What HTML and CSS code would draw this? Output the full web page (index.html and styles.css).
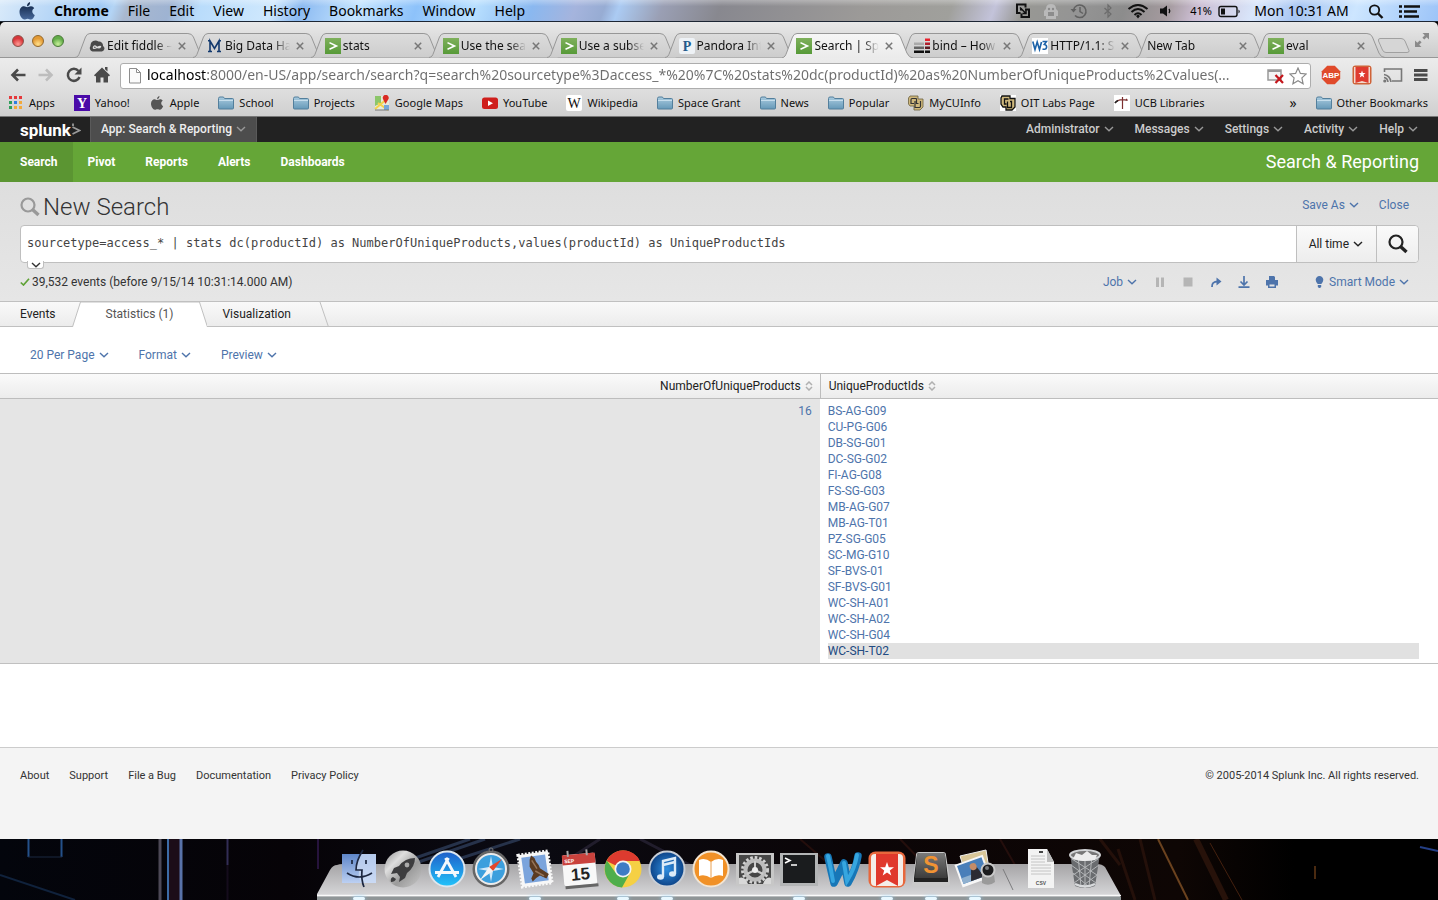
FILE: index.html
```html
<!DOCTYPE html>
<html lang="en">
<head>
<meta charset="utf-8">
<title>Search | Splunk</title>
<link rel="stylesheet" href="styles.css">
</head>
<body>
<svg class="defs" aria-hidden="true">
  <defs>
    <linearGradient id="g-folder" x1="0" y1="0" x2="0" y2="1"><stop offset="0" stop-color="#a9cbdf"/><stop offset="1" stop-color="#6699b8"/></linearGradient>
    <linearGradient id="g-tab" x1="0" y1="0" x2="0" y2="1"><stop offset="0" stop-color="#dcdcdc"/><stop offset="1" stop-color="#cdcdcd"/></linearGradient>
    <linearGradient id="g-tabon" x1="0" y1="0" x2="0" y2="1"><stop offset="0" stop-color="#f6f6f6"/><stop offset="1" stop-color="#ebebeb"/></linearGradient>
    <linearGradient id="g-green" x1="0" y1="0" x2="0" y2="1"><stop offset="0" stop-color="#7fb05c"/><stop offset="1" stop-color="#579a38"/></linearGradient>
    <linearGradient id="g-apple" x1="0" y1="0" x2="0" y2="1"><stop offset="0" stop-color="#0c2040"/><stop offset="1" stop-color="#47689a"/></linearGradient>
    <linearGradient id="g-blue" x1="0" y1="0" x2="0" y2="1"><stop offset="0" stop-color="#1f5fc9"/><stop offset="1" stop-color="#21c3fa"/></linearGradient>
    <linearGradient id="g-finder" x1="0" y1="0" x2="0" y2="1"><stop offset="0" stop-color="#5e86c9"/><stop offset="1" stop-color="#bcd0f2"/></linearGradient>
    <linearGradient id="g-silver" x1="0" y1="0" x2="1" y2="1"><stop offset="0" stop-color="#8d8d8d"/><stop offset=".3" stop-color="#dedede"/><stop offset=".6" stop-color="#9b9b9b"/><stop offset="1" stop-color="#c8c8c8"/></linearGradient>
    <linearGradient id="g-shelf" x1="0" y1="0" x2="0" y2="1"><stop offset="0" stop-color="#a5a4a6"/><stop offset="1" stop-color="#dedee0"/></linearGradient>
    <linearGradient id="g-sublime" x1="0" y1="0" x2="0" y2="1"><stop offset="0" stop-color="#7a7a7a"/><stop offset="1" stop-color="#3c3c3c"/></linearGradient>
    <radialGradient id="g-itunes"><stop offset="0" stop-color="#2f8ee0"/><stop offset="1" stop-color="#0d4387"/></radialGradient>
  </defs>
  <symbol id="tab" viewBox="0 0 132 25" preserveAspectRatio="none"><path d="M0 24.500C3 24 3.500 22.500 4.500 20L10.500 4Q12 .5 15 .5H113Q117 .5 118.500 4L125 20Q127 24.500 131 24.500" fill="url(#g-tab)" stroke="#979797"/></symbol>
  <symbol id="tab-on" viewBox="0 0 132 25" preserveAspectRatio="none"><path d="M0 25C3 24 3.500 22.500 4.500 20L10.500 4Q12 .5 15 .5H113Q117 .5 118.500 4L125 20Q127 24.500 131 25" fill="url(#g-tabon)" stroke="#979797"/></symbol>
  <symbol id="splunk" viewBox="0 0 16 16"><path d="M0 0H16V16H0Z" fill="url(#g-green)"/><path d="M4.500 4.600 11.500 8 4.500 11.300" fill="none" stroke="#fff" stroke-width="1.600"/></symbol>
  <symbol id="x" viewBox="0 0 8 8"><path d="M.8.8 7.200 7.200M7.200.8.8 7.200" stroke="#777" stroke-width="1.500"/></symbol>
  <symbol id="folder" viewBox="0 0 16 14"><path d="M.5 2.500Q.5 1 2 1H5Q6 1 6.500 2.500H14.500Q15.500 2.500 15.500 3.500V12Q15.500 13 14.500 13H1.500Q.5 13 .5 12Z" fill="url(#g-folder)" stroke="#537f9c"/><path d="M1 4.500H15" stroke="#c6deec"/></symbol>
  <symbol id="apple" viewBox="0 0 16 18"><path d="M11 0Q11.300 3.500 8 4.500 7.800 1.200 11 0ZM8.200 5.300C9.300 5.300 10.200 4.300 12 4.300 13.400 4.300 14.700 5.200 15.200 6.200 12.300 7.800 12.900 11.700 15.800 12.900 15 15.200 13.500 17.500 11.900 17.500 10.600 17.500 10.200 16.700 8.600 16.700S6.500 17.500 5.400 17.500C3 17.500.5 13.500.5 10 .5 6.300 2.800 4.300 5 4.300 6.400 4.300 7.300 5.300 8.200 5.300Z"/></symbol>
  <symbol id="chev" viewBox="0 0 10 6"><path d="M1 1 5 4.800 9 1" fill="none" stroke="currentColor" stroke-width="1.400"/></symbol>
  <symbol id="sort" viewBox="0 0 8 10"><path d="M1 4 4 1 7 4M1 6 4 9 7 6" fill="none" stroke="#b0b0b0" stroke-width="1.500"/></symbol>
  <symbol id="glass" viewBox="0 0 20 20"><circle cx="8" cy="8" r="6.500" fill="none" stroke="currentColor" stroke-width="2.200"/><path d="M12.500 12.500 18.500 18" stroke="currentColor" stroke-width="3.400"/></symbol>
</svg>

<header class="menubar">
  <nav class="menus" aria-label="Application menu">
    <svg class="apple" viewBox="0 0 16 18" fill="url(#g-apple)"><use href="#apple"/></svg>
    <button class="menu strong">Chrome</button><button class="menu">File</button><button class="menu">Edit</button><button class="menu">View</button><button class="menu">History</button><button class="menu">Bookmarks</button><button class="menu">Window</button><button class="menu">Help</button>
  </nav>
  <div class="status">
    <svg width="20" height="16" viewBox="0 0 20 16" fill="none" stroke="#111" stroke-width="2"><path d="M7.500 10H4V1.500H12.500V4.500M9 6.500H7V6.500M12 6.500H16V14H8.500V10.500"/><path d="M7 4.500 12.500 10M9.500 10.500H13V7" stroke-width="1.500"/></svg>
    <svg width="16" height="16" viewBox="0 0 16 16" fill="#b9b9b9"><path d="M3 6Q3 1 8 1T13 6L15 8V13H13V16H3V13H1V8Z"/><circle cx="6" cy="6" r="1.200" fill="#8a8a8a"/><circle cx="10" cy="6" r="1.200" fill="#8a8a8a"/><path d="M5 9H11V13H5Z" fill="#8c8c8c"/></svg>
    <svg width="20" height="16" viewBox="0 0 20 16" fill="none" stroke="#616161" stroke-width="1.500"><path d="M4.500 7A6.300 6.300 0 1 1 6 12.500M11 4V8.500L14 10.500"/><path d="M1.500 6 4.500 9.500 7.500 6Z" fill="#616161" stroke="none"/></svg>
    <svg width="18" height="16" viewBox="0 0 18 16" fill="none" stroke="#6c6c6c" stroke-width="1.200"><path d="M5.500 5 12 11 9 14V2L12 5 5.500 11"/></svg>
    <svg width="22" height="16" viewBox="0 0 22 16" fill="none" stroke="#111" stroke-width="2"><path d="M1.500 6Q11-2 20.500 6M4.500 9Q11 3 17.500 9M7.500 12Q11 8.500 14.500 12"/><path d="M9 13 11 11.500 13 13 11 15.500Z" fill="#111" stroke="none"/></svg>
    <svg width="21" height="16" viewBox="0 0 21 16"><path d="M1 5.500H4L8 2.500V13.500L4 10.500H1Z" fill="#111"/><path d="M10 6Q11.500 8 10 10" fill="none" stroke="#111" stroke-width="1.300"/></svg>
    <span class="battery">41%<svg width="24" height="16" viewBox="0 0 24 16"><rect x="1" y="3.500" width="18" height="10" rx="2" fill="none" stroke="#111" stroke-width="1.400"/><path d="M3 5.500H7V11.500H3ZM20.500 6.500Q23 8.500 20.500 10.500Z" fill="#111"/></svg></span>
    <time>Mon 10:31 AM</time>
    <svg width="28" height="16" viewBox="0 0 28 16" fill="none" stroke="#111"><circle cx="13.500" cy="7" r="4.700" stroke-width="1.800"/><path d="M17 10.500 21.500 15" stroke-width="2.400"/></svg>
    <svg width="21" height="16" viewBox="0 0 21 16" stroke="#111" stroke-width="2.600"><path d="M0 3.500H3M0 8.500H3M0 13.500H3M5 3.500H21M5 8.500H18M5 13.500H20"/></svg>
  </div>
</header>

<div class="window">
  <div class="tabstrip">
    <div class="lights"><button class="light red" aria-label="Close window"></button><button class="light yellow" aria-label="Minimize"></button><button class="light green" aria-label="Zoom"></button></div>
    <div class="tabs">
      <div class="tab"><svg class="shape"><use href="#tab"/></svg><svg class="ico" viewBox="0 0 16 16"><path d="M3.500 13.500A3.500 3.500 0 0 1 1.500 8 5 5 0 0 1 9.500 3.500 4 4 0 0 1 14 8 3 3 0 0 1 13 13.500Z" fill="#4a4a4a"/><path d="M8 9.500Q5.500 6.500 4.500 9T8 9.500 11.500 9 8 9.500" fill="none" stroke="#ddd" stroke-width="1.200"/></svg><span class="name">Edit fiddle –</span><button class="close" aria-label="Close tab"><svg><use href="#x"/></svg></button></div>
      <div class="tab"><svg class="shape"><use href="#tab"/></svg><svg class="ico" viewBox="0 0 16 16"><path d="M3 13.500V3L7.500 10.500 12 3V13.500M1 2.700H3.500M11.500 2.700H14M1 13.500H5M10 13.500H14" fill="none" stroke="#12396e" stroke-width="1.600"/></svg><span class="name">Big Data Hac</span><button class="close" aria-label="Close tab"><svg><use href="#x"/></svg></button></div>
      <div class="tab"><svg class="shape"><use href="#tab"/></svg><svg class="ico"><use href="#splunk"/></svg><span class="name">stats</span><button class="close" aria-label="Close tab"><svg><use href="#x"/></svg></button></div>
      <div class="tab"><svg class="shape"><use href="#tab"/></svg><svg class="ico"><use href="#splunk"/></svg><span class="name">Use the sear</span><button class="close" aria-label="Close tab"><svg><use href="#x"/></svg></button></div>
      <div class="tab"><svg class="shape"><use href="#tab"/></svg><svg class="ico"><use href="#splunk"/></svg><span class="name">Use a subse</span><button class="close" aria-label="Close tab"><svg><use href="#x"/></svg></button></div>
      <div class="tab"><svg class="shape"><use href="#tab"/></svg><svg class="ico" viewBox="0 0 16 16"><rect width="16" height="16" rx="2" fill="#eef2f6"/><text x="8" y="13" text-anchor="middle" class="fav-p">P</text></svg><span class="name">Pandora Int</span><button class="close" aria-label="Close tab"><svg><use href="#x"/></svg></button></div>
      <div class="tab on"><svg class="shape"><use href="#tab-on"/></svg><svg class="ico"><use href="#splunk"/></svg><span class="name">Search | Spl</span><button class="close" aria-label="Close tab"><svg><use href="#x"/></svg></button></div>
      <div class="tab"><svg class="shape"><use href="#tab"/></svg><svg class="ico" viewBox="0 0 16 16"><path d="M0 4.500H10V7H0Z" fill="#aaa"/><path d="M0 8.500H10V11H0Z" fill="#666"/><path d="M0 12.500H10V15H0ZM11 12.500H16V15H11Z" fill="#111"/><path d="M11 .5H16V3H11Z" fill="#e8202c"/><path d="M11 4.500H16V7H11Z" fill="#b01f2c"/><path d="M11 8.500H16V11H11Z" fill="#5d1a22"/></svg><span class="name">bind – How</span><button class="close" aria-label="Close tab"><svg><use href="#x"/></svg></button></div>
      <div class="tab"><svg class="shape"><use href="#tab"/></svg><svg class="ico" viewBox="0 0 16 16"><path d="M0 0H16V16H0Z" fill="#fff"/><path d="M.8 3.500 3 11.500 5.200 4 7.500 11.500 9.500 4" fill="none" stroke="#1c62a8" stroke-width="1.600"/><path d="M10.500 3.500H14.500L12.300 6.500Q15 7 14.500 9.500T10.500 11" fill="none" stroke="#1c62a8" stroke-width="1.600"/></svg><span class="name">HTTP/1.1: S</span><button class="close" aria-label="Close tab"><svg><use href="#x"/></svg></button></div>
      <div class="tab"><svg class="shape"><use href="#tab"/></svg><span class="name plain">New Tab</span><button class="close" aria-label="Close tab"><svg><use href="#x"/></svg></button></div>
      <div class="tab"><svg class="shape"><use href="#tab"/></svg><svg class="ico"><use href="#splunk"/></svg><span class="name">eval</span><button class="close" aria-label="Close tab"><svg><use href="#x"/></svg></button></div>
    </div>
    <button class="newtab" aria-label="New tab"><svg width="34" height="18" viewBox="0 0 34 18"><path d="M3 1.500H24Q27 1.500 28 4L32 13.500Q32.500 15.500 30 15.500H9Q6.500 15.500 5.500 13L1.500 4Q1 1.500 3 1.500Z" fill="#d6d6d6" stroke="#a0a0a0"/></svg></button>
    <button class="expand" aria-label="Full screen"><svg width="16" height="16" viewBox="0 0 16 16" fill="#8a8a8a"><path d="M8.500 1H15V7.500L12.700 5.200 10.300 7.600 8.400 5.700 10.800 3.300ZM7.500 15H1V8.500L3.300 10.800 5.700 8.400 7.600 10.300 5.200 12.700Z"/></svg></button>
  </div>

  <div class="toolbar">
    <div class="navbtns">
      <button aria-label="Back"><svg width="16" height="16" viewBox="0 0 16 16" fill="none" stroke="#4a4a4a" stroke-width="2.600"><path d="M8 2.500 2.500 8 8 13.500M2.500 8H15.500"/></svg></button>
      <button aria-label="Forward"><svg width="16" height="16" viewBox="0 0 16 16" fill="none" stroke="#bdbdbd" stroke-width="2.600"><path d="M8 2.500 13.500 8 8 13.500M13.500 8H.5"/></svg></button>
      <button aria-label="Reload"><svg width="16" height="16" viewBox="0 0 16 16"><path d="M13.500 10A6 6 0 1 1 12.500 4" fill="none" stroke="#4a4a4a" stroke-width="2.500"/><path d="M15.500.5V7.500H8.500Z" fill="#4a4a4a"/></svg></button>
      <button aria-label="Home"><svg width="16" height="16" viewBox="0 0 16 16" fill="#4a4a4a"><path d="M8 .5 16 8.200 14.800 9.500 14 8.800V15.500H9.500V10.500H6.500V15.500H2V8.800L1.200 9.500 0 8.200ZM11 0H13.500V4.500L11 2.200Z"/></svg></button>
    </div>
    <div class="omnibox">
      <svg width="12" height="16" viewBox="0 0 12 16" fill="#fbfbfb" stroke="#8d8d8d"><path d="M.5.5H7.500L11.500 4.500V15H.5ZM7.500.5V4.500H11.500"/></svg>
      <input class="url" aria-label="Address" value="localhost:8000/en-US/app/search/search?q=search%20sourcetype%3Daccess_*%20%7C%20stats%20dc(productId)%20as%20NumberOfUniqueProducts%2Cvalues(...">
      <svg width="18" height="16" viewBox="0 0 18 16"><path d="M1 2H14V12H1Z" fill="#f4f4f4" stroke="#999" stroke-width="1.500"/><path d="M1 3H14" stroke="#999" stroke-width="2"/><path d="M8.500 7 16 15M16 7 8.500 15" stroke="#c4161c" stroke-width="2.200"/></svg>
      <svg width="18" height="18" viewBox="0 0 18 18"><path d="M9 1 11.400 6.400 17.200 7 12.900 10.900 14.100 16.800 9 13.800 3.900 16.800 5.100 10.900.8 7 6.600 6.400Z" fill="#fff" stroke="#8a8a8a" stroke-width="1.200"/></svg>
    </div>
    <div class="exts">
      <button aria-label="Adblock"><svg width="20" height="20" viewBox="0 0 20 20"><path d="M6.200.8H13.800L19.200 6.200V13.800L13.800 19.200H6.200L.8 13.800V6.200Z" fill="#e04a2b"/><text x="10" y="13" text-anchor="middle" class="abp">ABP</text></svg></button>
      <button aria-label="Wunderlist"><svg width="20" height="20" viewBox="0 0 20 20"><rect x=".5" y=".5" width="19" height="19" rx="3" fill="#cf6338"/><path d="M2 2H18V18H2Z" fill="#f3d9cc"/><path d="M3.500 2H16.500V18L10 16 3.500 18Z" fill="#df3b30"/><path d="M10 5.500 10.900 8.100H13.500L11.400 9.800 12.200 12.500 10 11 7.800 12.500 8.600 9.800 6.500 8.100H9.100Z" fill="#fff"/></svg></button>
      <button aria-label="Cast"><svg width="20" height="16" viewBox="0 0 20 16" fill="none" stroke="#777" stroke-width="1.600"><path d="M1.500 5V2H18.500V14H9"/><path d="M1 7.500Q7 8.500 8 15M1 10.500Q4.500 11 5 15"/><circle cx="1.800" cy="14" r=".8" fill="#777"/></svg></button>
      <button aria-label="Menu"><svg width="14" height="14" viewBox="0 0 14 14" stroke="#4a4a4a" stroke-width="2.800"><path d="M0 2.500H13.500M0 7H13.500M0 11.500H13.500"/></svg></button>
    </div>
  </div>

  <nav class="bookmarks" aria-label="Bookmarks">
    <a href="#"><svg viewBox="0 0 16 16"><path d="M1 1H4V4H1ZM6 1H9V4H6ZM11 1H14V4H11Z" fill="#e5383b"/><path d="M1 6H4V9H1ZM1 11H4V14H1Z" fill="#2e9e5b"/><path d="M6 6H9V9H6Z" fill="#2f7de1"/><path d="M11 6H14V9H11ZM6 11H9V14H6ZM11 11H14V14H11Z" fill="#f2a93b"/></svg>Apps</a>
    <a href="#"><svg viewBox="0 0 16 16"><path d="M0 0H16V16H0Z" fill="#4a0aa8"/><text x="8" y="13" text-anchor="middle" class="fav-y">Y</text></svg>Yahoo!</a>
    <a href="#"><svg viewBox="-2 -1 20 20" fill="#555"><use href="#apple" width="16" height="18"/></svg>Apple</a>
    <a href="#"><svg><use href="#folder"/></svg>School</a>
    <a href="#"><svg><use href="#folder"/></svg>Projects</a>
    <a href="#"><svg viewBox="0 0 16 16"><path d="M1 1H15V15H1Z" fill="#e8ead9"/><path d="M1 1H7V8L1 11Z" fill="#8cc66a"/><path d="M1 14 14 3M4 8 14 15" stroke="#f4d34c" stroke-width="2"/><path d="M10 10H15V15H10Z" fill="#77a8d8"/><path d="M11.500 9 9 4A3 3 0 1 1 14.500 4Z" fill="#d92b23"/><path d="M1 15H15" stroke="#777"/></svg>Google Maps</a>
    <a href="#"><svg viewBox="0 0 16 16"><rect y="2.500" width="16" height="11.500" rx="2.500" fill="#cf1f1c"/><path d="M6 5.500 11 8.200 6 11Z" fill="#fff"/></svg>YouTube</a>
    <a href="#"><svg viewBox="0 0 16 16"><rect width="16" height="16" rx="2" fill="#fff"/><text x="8" y="13" text-anchor="middle" class="fav-w">W</text></svg>Wikipedia</a>
    <a href="#"><svg><use href="#folder"/></svg>Space Grant</a>
    <a href="#"><svg><use href="#folder"/></svg>News</a>
    <a href="#"><svg><use href="#folder"/></svg>Popular</a>
    <a href="#"><svg viewBox="0 0 16 16"><path d="M2 1H10V4H15V12L12 15H6V11H2L.5 9V3Z" fill="#cfb87c" stroke="#6b5f3c" stroke-width=".8"/><path d="M8.500 3.500H4Q3 3.500 3 5V8.500H6M7 6V12.500H11.500Q12.500 12.500 12.500 11V6M8.500 3.500V8.500H10.500" fill="none" stroke="#333" stroke-width="1.200"/></svg>MyCUInfo</a>
    <a href="#"><svg viewBox="0 0 16 16"><path d="M0 0H16V16H0Z" fill="#fff"/><path d="M2 1H10V3.500H15V12L12 15H6V12H3L1 9V3Z" fill="#cfb87c" stroke="#111" stroke-width="1.300"/><path d="M8.500 4H4.500V9H6.500M7.500 6.500V12.500H11.500V6.500H10" fill="none" stroke="#111" stroke-width="1.300"/></svg>OIT Labs Page</a>
    <a href="#"><svg viewBox="0 0 16 16"><path d="M0 0H16V16H0Z" fill="#fff"/><path d="M1 8Q5 3 13.500 5.500M8.500 2V14M13.500 5.500 12 4" fill="none" stroke="#7c3030" stroke-width="1.200"/><path d="M1 8Q2 6.500 4 5.500" stroke="#222" fill="none" stroke-width="1.500"/></svg>UCB Libraries</a>
    <button class="more" aria-label="More bookmarks">»</button>
    <a class="other" href="#"><svg><use href="#folder"/></svg>Other Bookmarks</a>
  </nav>

  <div class="page">
    <div class="topbar">
      <a class="logo" href="#">splunk<svg width="10" height="14" viewBox="0 0 10 14" fill="none" stroke="#999" stroke-width="1.800"><path d="M1.500 4 8.500 7.500 1.500 11M2 .5V3"/></svg></a>
      <button class="appmenu">App: Search &amp; Reporting<svg class="chev"><use href="#chev"/></svg></button>
      <nav class="sysmenu" aria-label="System">
        <button>Administrator<svg class="chev"><use href="#chev"/></svg></button><button>Messages<svg class="chev"><use href="#chev"/></svg></button><button>Settings<svg class="chev"><use href="#chev"/></svg></button><button>Activity<svg class="chev"><use href="#chev"/></svg></button><button>Help<svg class="chev"><use href="#chev"/></svg></button>
      </nav>
    </div>
    <nav class="appnav" aria-label="App">
      <a class="here" href="#">Search</a><a href="#">Pivot</a><a href="#">Reports</a><a href="#">Alerts</a><a href="#">Dashboards</a>
      <span class="appname">Search &amp; Reporting</span>
    </nav>

    <section class="search">
      <div class="titlebar">
        <h1><svg width="20" height="20"><use href="#glass"/></svg>New Search</h1>
        <div class="actions"><button>Save As<svg class="chev"><use href="#chev"/></svg></button><button>Close</button></div>
      </div>
      <form class="searchbar">
        <input class="query" aria-label="Search query" value="sourcetype=access_* | stats dc(productId) as NumberOfUniqueProducts,values(productId) as UniqueProductIds">
        <button type="button" class="range">All time<svg class="chev"><use href="#chev"/></svg></button>
        <button type="button" class="go" aria-label="Search"><svg width="20" height="20"><use href="#glass"/></svg></button>
        <button type="button" class="grow" aria-label="Expand query"><svg class="chev"><use href="#chev"/></svg></button>
      </form>
      <div class="jobbar">
        <span class="count"><svg width="10" height="8" viewBox="0 0 10 8"><path d="M.8 4.500 3.500 7 9 .8" fill="none" stroke="#5fa236" stroke-width="1.700"/></svg>39,532 events (before 9/15/14 10:31:14.000 AM)</span>
        <div class="jobs">
          <button>Job<svg class="chev"><use href="#chev"/></svg></button>
          <div class="jobicons">
          <button aria-label="Pause"><svg width="12" height="12" viewBox="0 0 12 12"><path d="M2 1.500H5V11H2ZM7 1.500H10V11H7Z" fill="#b5b5b5"/></svg></button>
          <button aria-label="Stop"><svg width="12" height="12" viewBox="0 0 12 12"><path d="M1.500 1.500H10.500V10.500H1.500Z" fill="#b5b5b5"/></svg></button>
          <button aria-label="Share"><svg width="12" height="12" viewBox="0 0 12 12"><path d="M2 11Q1.500 5.500 8 5.500" fill="none" stroke="#4e74ab" stroke-width="1.800"/><path d="M6.500 1.500 11.500 5.500 6.500 9.500Z" fill="#4e74ab"/></svg></button>
          <button aria-label="Export"><svg width="12" height="12" viewBox="0 0 12 12"><path d="M6 0V9M2.500 5.500 6 9 9.500 5.500M.5 11.200H11.500" fill="none" stroke="#4e74ab" stroke-width="1.700"/></svg></button>
          <button aria-label="Print"><svg width="12" height="12" viewBox="0 0 12 12"><path d="M3 0H8L9 1V4H12V9.500H10V12H2V9.500H0V4H3Z" fill="#4e74ab"/><path d="M3.500 8.500H8.500V10.500H3.500Z" fill="#e4e4e4"/></svg></button>
          </div>
          <button class="mode"><svg width="9" height="12" viewBox="0 0 9 12" fill="#4e74ab"><path d="M4.500 0A3.800 3.800 0 0 1 8.300 4Q8 6.500 6.300 8H2.700Q1 6.500.7 4A3.800 3.800 0 0 1 4.500 0ZM2.800 9H6.200V11L5 12H4L2.800 11Z"/></svg>Smart Mode<svg class="chev"><use href="#chev"/></svg></button>
        </div>
      </div>
    </section>

    <div class="resulttabs" role="tablist">
      <button role="tab" class="events">Events</button>
      <button role="tab" class="stats" aria-selected="true"><svg viewBox="0 0 136 25" preserveAspectRatio="none"><path d="M.5 25 8.500 0H127.500L135.500 25" fill="#fff" stroke="#c0c0c0"/></svg><span>Statistics (1)</span></button>
      <button role="tab" class="visual"><span>Visualization</span><svg viewBox="0 0 10 25" preserveAspectRatio="none"><path d="M1 0 9.500 25" fill="none" stroke="#c0c0c0"/></svg></button>
    </div>

    <main class="results">
      <div class="controls"><button>20 Per Page<svg class="chev"><use href="#chev"/></svg></button><button>Format<svg class="chev"><use href="#chev"/></svg></button><button>Preview<svg class="chev"><use href="#chev"/></svg></button></div>
      <table>
        <thead><tr><th class="num">NumberOfUniqueProducts<svg class="sort"><use href="#sort"/></svg></th><th class="id">UniqueProductIds<svg class="sort"><use href="#sort"/></svg></th></tr></thead>
        <tbody><tr><td class="num">16</td><td><ul class="ids"><li>BS-AG-G09</li><li>CU-PG-G06</li><li>DB-SG-G01</li><li>DC-SG-G02</li><li>FI-AG-G08</li><li>FS-SG-G03</li><li>MB-AG-G07</li><li>MB-AG-T01</li><li>PZ-SG-G05</li><li>SC-MG-G10</li><li>SF-BVS-01</li><li>SF-BVS-G01</li><li>WC-SH-A01</li><li>WC-SH-A02</li><li>WC-SH-G04</li><li class="hot">WC-SH-T02</li></ul></td></tr></tbody>
      </table>
    </main>

    <footer class="foot"><a href="#">About</a><a href="#">Support</a><a href="#">File a Bug</a><a href="#">Documentation</a><a href="#">Privacy Policy</a><span>© 2005-2014 Splunk Inc. All rights reserved.</span></footer>
  </div>
</div>

<div class="desktop">
  <svg class="wall" viewBox="0 0 1438 61" preserveAspectRatio="none" fill="none">
    <path d="M28.500 0V18M61.500 0V18" stroke="#24518a" stroke-width="2"/><path d="M28 18H62" stroke="#1b2840"/>
    <path d="M0 36 75 61" stroke="#10223c" stroke-width="2"/>
    <path d="M175 0V61" stroke="#1c0d18" stroke-width="12"/><path d="M160 0V61" stroke="#4c4856" stroke-width="3"/><path d="M168 0V61" stroke="#3c6ba5" stroke-width="2"/><path d="M181 0V61" stroke="#5872a8" stroke-width="3"/>
    <path d="M227.500 0V26" stroke="#322d55" stroke-width="2"/><path d="M227.500 26V61" stroke="#150c1c" stroke-width="2"/><path d="M318 0V30" stroke="#26133c" stroke-width="2"/>
    <path d="M395 26 470 0M410 26 485 0M440 26 520 0" stroke="#26324a" stroke-width="3"/><path d="M560 26 600 0M640 0 690 26" stroke="#211d2c" stroke-width="3"/>
    <path d="M800 0 830 26M900 0 925 26M1000 0 1015 26" stroke="#240e0c" stroke-width="2"/>
    <path d="M1100 0 1120 26M1118 10 1135 61M1140 0 1155 61" stroke="#24100a" stroke-width="3"/><path d="M1158 0 1188 61" stroke="#6b421e" stroke-width="2"/><path d="M1196 0 1226 61" stroke="#27120a" stroke-width="6"/><path d="M1210 4 1242 61" stroke="#45210f"/>
    <path d="M1315 27V40" stroke="#4a2a10" stroke-width="2"/><path d="M1420 8 1438 12" stroke="#243f86" stroke-width="2"/>
  </svg>
  <div class="dock">
    <svg class="shelf" viewBox="0 0 804 36" preserveAspectRatio="none"><path d="M20 1Q22 0 26 0H780Q785 0 788 3L803 30V36H0V30L13 6Q16 1 20 1Z" fill="url(#g-shelf)"/><path d="M0 31.500H804" stroke="#fafafa" stroke-width="1.500"/><path d="M0 32.500H804V36H0Z" fill="#8f9597"/></svg>
    <button class="app run" aria-label="Finder"><svg viewBox="0 0 44 44"><path d="M5 7H39V36H5Z" fill="url(#g-finder)"/><path d="M24 7H39V36H24Q21 29 22 24H18Q19 14 24 7Z" fill="#cfdef5" opacity=".75"/><path d="M26 3Q19 14 19 23H25Q24 33 27 40M10 26Q22 34 35 26M15 13V17M29 13V17" fill="none" stroke="#1c2740" stroke-width="1.700"/></svg></button>
    <button class="app" aria-label="Launchpad"><svg viewBox="0 0 44 44"><circle cx="22" cy="22" r="18.500" fill="url(#g-silver)"/><path d="M34 11Q24 11 18 19L13 21 10 27 16 26 19 30 18 35 24 31 26 26Q34 20 34 11ZM12 30Q9 31 10 35 14 35 15 32Z" fill="#3d3d3f"/><circle cx="26" cy="18" r="2.400" fill="#aaa"/></svg></button>
    <button class="app" aria-label="App Store"><svg viewBox="0 0 44 44"><circle cx="22" cy="22" r="17.500" fill="url(#g-blue)" stroke="#dce6ee" stroke-width="2"/><path d="M23.500 11 13 30M20.500 11 31 30M10 25.500H34" stroke="#f4f8fc" stroke-width="2.800"/></svg></button>
    <button class="app" aria-label="Safari"><svg viewBox="0 0 44 44"><circle cx="22" cy="22" r="16.500" fill="#3c9fdd" stroke="#666" stroke-width="4"/><circle cx="22" cy="22" r="15" fill="none" stroke="#ececec" stroke-width="2"/><path d="M22 9 24 20 35 22 24 24 22 35 20 24 9 22 20 20Z" fill="#cfe9fa"/><path d="M33 12 24 24 20 20Z" fill="#e4472b"/><path d="M11 33 20 20 24 24Z" fill="#f4f4f4"/><circle cx="22" cy="3" r="2" fill="none" stroke="#777"/></svg></button>
    <button class="app run" aria-label="Mail"><svg viewBox="0 0 44 44"><g transform="rotate(-8 22 22)"><path d="M7 6H37V38H7Z" fill="#f7f7f7" stroke="#f7f7f7" stroke-width="3" stroke-dasharray="2 1.500"/><path d="M10 9H34V35H10Z" fill="#7ba4dc"/><path d="M20 8 23 11 24 15Q27 19 27 22L35 29 32 33 26 29 22 31 18 34 17 31 20 26 17 19 18 12Z" fill="#5b3b22"/><path d="M20 13 24 22M22 24 30 30" stroke="#96755a" stroke-width="1.500"/></g></svg></button>
    <button class="app" aria-label="Calendar"><svg viewBox="0 0 44 44"><g transform="rotate(-5 22 22)"><rect x="6" y="7" width="33" height="31" rx="2" fill="#f8f8f8"/><path d="M6 7H39V17H6Z" fill="#c9423d"/><path d="M7 38H40V41H7Z" fill="#666"/><path d="M12 3V9M31 3V9" stroke="#aaa" stroke-width="2"/><text x="8" y="15" class="calmon">SEP</text><text x="23" y="33" text-anchor="middle" class="calday">15</text></g></svg></button>
    <button class="app run" aria-label="Chrome"><svg viewBox="0 0 44 44"><circle cx="22" cy="22" r="18.500" fill="#f5d044"/><path d="M22 22 5.500 14A18.500 18.500 0 0 1 39 14H22Z" fill="#dd3b2f"/><path d="M5.800 13.500A18.500 18.500 0 0 0 21 40.500L29 26 22 22 14 25Z" fill="#4fae4c"/><circle cx="22" cy="22" r="8.500" fill="#f4f4f4"/><circle cx="22" cy="22" r="6.800" fill="#3d7cc4"/></svg></button>
    <button class="app run" aria-label="iTunes"><svg viewBox="0 0 44 44"><circle cx="22" cy="22" r="17.500" fill="url(#g-itunes)" stroke="#c8ced6" stroke-width="2"/><path d="M18 30V14L30 11V27M18 18 30 15" fill="none" stroke="#dcebf8" stroke-width="2.400"/><ellipse cx="15.500" cy="30" rx="3.500" ry="2.800" fill="#dcebf8"/><ellipse cx="27.500" cy="27" rx="3.500" ry="2.800" fill="#dcebf8"/></svg></button>
    <button class="app" aria-label="iBooks"><svg viewBox="0 0 44 44"><circle cx="22" cy="22" r="17.500" fill="#f19127" stroke="#f3e5d2" stroke-width="2"/><path d="M22 15Q16 10 10 13V29Q16 27 22 31 28 27 34 29V13Q28 10 22 15Z" fill="#fff"/><path d="M22 15V31" stroke="#e9a050"/></svg></button>
    <button class="app" aria-label="System Preferences"><svg viewBox="0 0 44 44"><path d="M3 6H41V39H3Z" fill="#c7c7c7"/><path d="M6 8H38V37H6Z" fill="#474747"/><circle cx="22" cy="23" r="12" fill="none" stroke="#d2d2d2" stroke-width="4" stroke-dasharray="2.500 1.800"/><circle cx="22" cy="23" r="9.500" fill="none" stroke="#bcbcbc" stroke-width="4"/><path d="M22 23V14M22 23 30 27M22 23 14 27" stroke="#ccc" stroke-width="2"/><circle cx="22" cy="23" r="3" fill="#eee"/><path d="M6 31Q12 29 15 37H6ZM38 31Q33 29 30 37H38Z" fill="#d8d8d8"/></svg></button>
    <button class="app run" aria-label="Terminal"><svg viewBox="0 0 44 44"><path d="M3 6H41V39H3Z" fill="#b3b5b6"/><path d="M6 8H38V36H6Z" fill="#1a1c1e"/><path d="M8 11 13 13.500 8 16M14 18H20" fill="none" stroke="#fff" stroke-width="1.600"/></svg></button>
    <button class="app" aria-label="Word"><svg viewBox="0 0 44 44"><path d="M7 10Q10 24 13 36L23 16 27 36Q35 22 37 9" fill="none" stroke="#1777b7" stroke-width="7.500" stroke-linecap="round" stroke-linejoin="round"/><path d="M7 9Q10 22 12 34M23 16 26 34Q34 21 36 8" fill="none" stroke="#36a6e0" stroke-width="4" stroke-linecap="round"/></svg></button>
    <button class="app run" aria-label="Wunderlist"><svg viewBox="0 0 44 44"><rect x="3.500" y="4.500" width="37" height="36" rx="7" fill="#e8673c"/><rect x="6" y="7" width="32" height="32" rx="4" fill="#f4ede8"/><path d="M11 7H33V39L22 33 11 39Z" fill="#e0382c"/><path d="M22 15 23.800 20.200H29L24.800 23.500 26.300 28.500 22 25.600 17.700 28.500 19.200 23.500 15 20.200H20.200Z" fill="#fff"/></svg></button>
    <button class="app run" aria-label="Sublime Text"><svg viewBox="0 0 44 44"><path d="M4 34 7 8Q7 5 10 5H34Q37 5 37 8L41 34V37Q41 40 38 40H6Q3 40 3 37Z" fill="#c9c9c9"/><path d="M8 8Q8 6 10 6H34Q36 6 36 8L39 31V35H5V31Z" fill="#222"/><path d="M8 8Q8 6 10 6H34Q36 6 36 8L38 31H6Z" fill="url(#g-sublime)"/><text x="22" y="26" text-anchor="middle" class="sublime">S</text></svg></button>
    <button class="app run" aria-label="Preview"><svg viewBox="0 0 44 44"><path d="M7 9 33 3 36 22 13 28Z" fill="#d8c698" stroke="#eee"/><g transform="rotate(-20 20 25)"><path d="M5 12H35V36H5Z" fill="#f7f7f7"/><path d="M7 14H33V33H7Z" fill="#4a7fb9"/><path d="M7 27H33V33H7Z" fill="#8fb0cf"/><path d="M15 33 19 22 25 21 29 33Z" fill="#2b2b33"/><circle cx="22" cy="20" r="3.500" fill="#c58c68"/></g><path d="M29 28H41L42 35Q36 40 29 36Z" fill="#9a9a9a"/><circle cx="35" cy="23" r="6.500" fill="#1b1b1d" stroke="#c8c8c8" stroke-width="2"/><circle cx="34" cy="21" r="2" fill="#77797c"/></svg></button>
    <svg class="sep" viewBox="0 0 22 44"><path d="M6 22 16 43" stroke="#7c7c7e"/></svg>
    <button class="app" aria-label="CSV file"><svg viewBox="0 0 44 44"><path d="M9 2H28L35 15V41H9Z" fill="#f3f3f3"/><path d="M28 2V15H35Z" fill="#bdbdbd"/><path d="M12 9H26M12 12H26M12 15H26M12 18H32M12 21H32M12 24H32M12 27H32" stroke="#c4c4c4"/><path d="M20 4H24V6H20Z" fill="#444"/><text x="22" y="38" text-anchor="middle" class="csv">CSV</text></svg></button>
    <button class="app" aria-label="Trash"><svg viewBox="0 0 44 44"><path d="M7 7 12 39Q22 43 32 39L37 7Z" fill="#6a6c6f"/><path d="M9 12 34 28M8 18 33 36M10 26 26 40M35 12 10 28M36 18 11 36M34 28 18 40M15 8 18 40M22 8V41M29 8 26 40" stroke="#b4b6b8"/><path d="M12 37Q22 42 32 37" fill="none" stroke="#d8dadc" stroke-width="2.500"/><ellipse cx="22" cy="8" rx="15" ry="5" fill="#777" stroke="#d2d4d6" stroke-width="2"/><path d="M10 12 13 6 19 8 24 4 29 8 34 8 32 13 20 14Z" fill="#ececec"/></svg></button>
  </div>
</div>
</body>
</html>
```
FILE: styles.css
```css
* { box-sizing: border-box; }
body { margin: 0; min-height: 100vh; display: flex; flex-direction: column; background: #000; font: 12px/16px Roboto, "Liberation Sans", sans-serif; color: #333; }
button { margin: 0; padding: 0; border: 0; background: none; font: inherit; color: inherit; display: inline-flex; align-items: center; white-space: nowrap; }
a { color: inherit; text-decoration: none; white-space: nowrap; }
svg { flex: none; display: block; }
.defs { position: absolute; width: 0; height: 0; }
.chev { width: 10px; height: 6px; margin-left: 4px; }

/* system menu bar */
.menubar { height: 22px; display: flex; justify-content: space-between; align-items: center; padding: 0 18px 0 19px; border-bottom: 1px solid #1d2634; font: 14px/20px "Noto Sans", sans-serif; color: #000;
  background: linear-gradient(rgba(255,255,255,.3), rgba(255,255,255,0) 30%), linear-gradient(110deg, #d9eafa 0, #9cc7f4 7%, #b3d4f5 8%, #a9b8cf 9%, #9eb3d2 12%, #b9dcfb 14%, #cfe8fd 19%, #8cbaf1 21%, #c4e4ff 25%, #8dc2fa 29%, #b9e0ff 33%, #8ab8f0 37%, #a5b4dd 40%, #97acd3 42%, #abcbf3 43%, #9a9fb4 46%, #88888f 50%, #9c9a98 60%, #a0a09c 66%, #c3c3da 69%, #989894 71%, #949494 75%, #8c8c8c 78%, #a49a9e 81%, #cbbdd2 83%, #d9e6fb 87%, #a8c6f2 90%, #cde6ff 94%, #9cc4f8 100%); }
.menus, .status { display: flex; align-items: center; }
.menus { gap: 19px; }
.apple { width: 16px; height: 18px; }
.strong { font-weight: 700; }
.status { gap: 10px; }
.status time { width: 99px; text-align: center; white-space: nowrap; }
.battery { display: flex; align-items: center; gap: 6px; font-size: 11px; }

/* browser window */
.window { flex: 1; display: flex; flex-direction: column; border-radius: 5px 5px 0 0; background: linear-gradient(#e9e9e9, #cbcbcb 36px); font-family: "Noto Sans", sans-serif; color: #111; }
.tabstrip { height: 36px; display: flex; padding: 0 8px 0 11px; align-items: flex-end; border-bottom: 1px solid #979797; }
.lights { flex: none; display: flex; gap: 8px; width: 64px; padding: 0 0 10px 1px; }
.light { width: 12px; height: 12px; border-radius: 50%; border: 1px solid #8b5048; }
.red { background: radial-gradient(circle at 50% 80%, #ff9a94, #d8363a 60%); }
.yellow { background: radial-gradient(circle at 50% 80%, #ffe08a, #e39a35 60%); border-color: #94682b; }
.green { background: radial-gradient(circle at 50% 80%, #c8f09a, #62ac49 60%); border-color: #4a7a38; }
.tabs { flex: 1; min-width: 0; display: flex; }
.tab { position: relative; flex: 1 1 0; min-width: 0; height: 25px; display: flex; align-items: center; padding-left: 14px; margin-bottom: -1px; font-size: 12px; }
.shape { position: absolute; left: 0; top: 0; width: calc(100% + 14px); height: 25px; }
.on { z-index: 1; }
.ico { position: relative; width: 16px; height: 16px; }
.name { position: relative; flex: 1; min-width: 0; margin-left: 2px; overflow: hidden; white-space: nowrap; mask-image: linear-gradient(90deg, #000 75%, transparent); }
.plain { margin-left: -3px; }
.close { position: relative; width: 8px; height: 8px; margin: 0 7px 0 6px; }
.close svg { width: 8px; height: 8px; }
.newtab { flex: none; width: 34px; margin: 0 3px 2px 5px; }
.expand { flex: none; width: 16px; margin-bottom: 9px; }
.toolbar { height: 34px; display: flex; align-items: center; gap: 10px; padding: 0 10px; background: linear-gradient(#ececec, #dddddd); }
.navbtns { display: flex; gap: 12px; }
.omnibox { flex: 1; display: flex; align-items: center; gap: 4px; height: 26px; margin-top: 1px; padding: 0 3px 0 8px; background: #fff; border: 1px solid #adadad; border-radius: 3px; }
.url { flex: 1; min-width: 0; border: 0; padding: 0 0 2px 2px; outline: 0; font: 14px/22px "Noto Sans", sans-serif; color: transparent; background: linear-gradient(90deg, #000 61px, #6d6d6d 61px); -webkit-background-clip: text; background-clip: text; }
.exts { display: flex; align-items: center; gap: 11px; }
.abp { font: 700 8px "Liberation Sans", sans-serif; fill: #fff; }
.fav-p { font: 700 14px "Liberation Serif", serif; fill: #225a8c; }
.fav-y { font: 700 14px "Liberation Serif", serif; fill: #fff; }
.fav-w { font: 14px "Liberation Serif", serif; fill: #111; }
.bookmarks { height: 25px; display: flex; align-items: center; gap: 19px; padding: 0 10px 3px 8px; background: linear-gradient(#dddddd, #cfcfcf); border-bottom: 1px solid #777; font-size: 11px; }
.bookmarks a { display: flex; align-items: center; gap: 5px; }
.bookmarks svg { width: 16px; height: 16px; }
.more { margin-left: auto; font-size: 14px; }

/* app page */
.page { flex: 1; display: flex; flex-direction: column; background: #fff; font-family: Roboto, "Liberation Sans", sans-serif; color: #333; }
.topbar { height: 25px; display: flex; background: #222; color: #ccc; font-weight: 500; }
.logo { display: flex; align-items: center; width: 90px; padding-left: 20px; color: #fff; font: 700 17px/20px Roboto, sans-serif; }
.appmenu { padding: 0 10px 2px; background: #4d4d4d; border: 1px solid #5a5a5a; border-width: 0 1px; color: #eee; }
.topbar .chev { color: #999; }
.sysmenu { margin-left: auto; display: flex; gap: 21px; padding: 0 20px 2px 0; }
.appnav { height: 40px; display: flex; align-items: center; background: #65a637; color: #fff; font-weight: 700; }
.appnav a { line-height: 40px; padding: 0 15px; }
.appnav .here { padding-left: 20px; background: #5b9532; }
.appname { margin-left: auto; padding-right: 19px; font-size: 18px; font-weight: 400; }
.search { padding: 12px 19px 0 20px; height: 120px; background: linear-gradient(#dedede, #e6e6e6); border-bottom: 1px solid #c0c0c0; }
.titlebar { display: flex; justify-content: space-between; height: 31px; }
h1 { margin: 0; display: flex; align-items: center; gap: 3px; height: 26px; font-size: 24px; font-weight: 300; }
h1 svg { color: #999; }
.actions { display: flex; gap: 20px; height: 22px; padding-right: 10px; color: #4e74ab; }
.searchbar { position: relative; display: flex; height: 38px; background: #fff; border: 1px solid #bfbfbf; border-radius: 4px; }
.query { flex: 1; min-width: 0; border: 0; background: none; outline: 0; padding: 0 6px 2px; font: 12px/16px "DejaVu Sans Mono", "Liberation Mono", monospace; color: #444; }
.range, .go { border-left: 1px solid #bfbfbf; background: linear-gradient(#fafafa, #ededed); }
.range { padding: 0 13px 0 12px; color: #222; }
.go { width: 42px; justify-content: center; border-radius: 0 4px 4px 0; color: #222; }
.grow { position: absolute; left: 6px; top: 35px; width: 17px; height: 8px; background: #fff; border: 1px solid #bfbfbf; border-top: 0; border-radius: 0 0 3px 3px; justify-content: center; }
.grow .chev { margin: 0; }
.jobbar { display: flex; justify-content: space-between; align-items: center; height: 38px; }
.count { display: flex; align-items: center; gap: 2px; }
.jobs { display: flex; align-items: center; padding-right: 10px; color: #4e74ab; }
.jobicons { display: flex; gap: 16px; margin: 0 37px 0 17px; }
.mode svg:first-child { margin-right: 5px; }
.resulttabs { height: 25px; display: flex; background: linear-gradient(#f9f9f9, #ececec); border-bottom: 1px solid #c0c0c0; color: #222; }
.resulttabs button { position: relative; height: 25px; padding-bottom: 2px; }
.resulttabs .events { padding-left: 20px; padding-right: 16px; }
.resulttabs .stats { padding-left: 34px; padding-right: 34px; }
.stats svg { position: absolute; left: 0; top: 0; width: 100%; height: 25px; }
.stats span { position: relative; color: #555; }
.resulttabs .visual { padding-left: 15px; padding-right: 38px; }
.visual svg { position: absolute; right: 0; top: 0; width: 10px; height: 25px; }
.controls { display: flex; gap: 30px; height: 46px; padding: 9px 30px 0; color: #4e74ab; }
.controls button { height: 38px; }
table { width: 100%; table-layout: fixed; border-collapse: separate; border-spacing: 0; border-bottom: 1px solid #c0c0c0; }
th { height: 26px; padding: 0 8px; text-align: left; font-weight: 400; background: linear-gradient(#fafafa, #ececec); border: 1px solid #bdbdbd; border-width: 1px 0; color: #222; }
th.num { width: 57%; padding: 0 7px 0 0; }
th.id { border-left-width: 1px; }
.sort { display: inline-block; width: 8px; height: 10px; margin-left: 4px; vertical-align: -1px; }
.num { text-align: right; }
td { padding: 4px 19px 4px 8px; vertical-align: top; color: #4e74ab; }
td.num { padding-right: 8px; background: #e5e5e5; }
.ids { margin: 0; padding: 0; list-style: none; }
.hot { background: #e1e1e1; color: #224b82; }
.foot { margin-top: auto; display: flex; gap: 20px; padding: 20px 19px 55px 20px; border-top: 1px solid #ccc; background: #f4f4f4; font-size: 11px; }
.foot span { margin-left: auto; }

/* wallpaper and dock */
.desktop { position: relative; height: 61px; display: flex; justify-content: center; background: linear-gradient(90deg, #03050c, #060307 20%, #0a0a12 35%, #0b0507 60%, #0e0604 82%, #000 90%); overflow: hidden; }
.wall { position: absolute; left: 0; top: 0; width: 100%; height: 61px; }
.dock { position: relative; display: flex; width: 804px; padding: 8px 15px 0 20px; }
.shelf { position: absolute; left: 0; bottom: 0; width: 100%; height: 36px; }
.app { position: relative; width: 44px; height: 53px; align-items: flex-start; }
.app svg { width: 44px; height: 44px; }
.run::after { content: ""; position: absolute; left: 16px; bottom: 0; width: 12px; height: 3px; border-radius: 3px; background: #e8f8ff; box-shadow: 0 0 4px #8fd4ff; }
.sep { position: relative; width: 22px; height: 44px; }
.calmon { font: 700 5px "Liberation Sans", sans-serif; fill: #fff; }
.calday { font: 700 17px "Liberation Sans", sans-serif; fill: #222; }
.csv { font: 700 5px "Liberation Sans", sans-serif; fill: #555; }
.sublime { font: 700 23px "Liberation Sans", sans-serif; fill: #f09333; }
```
